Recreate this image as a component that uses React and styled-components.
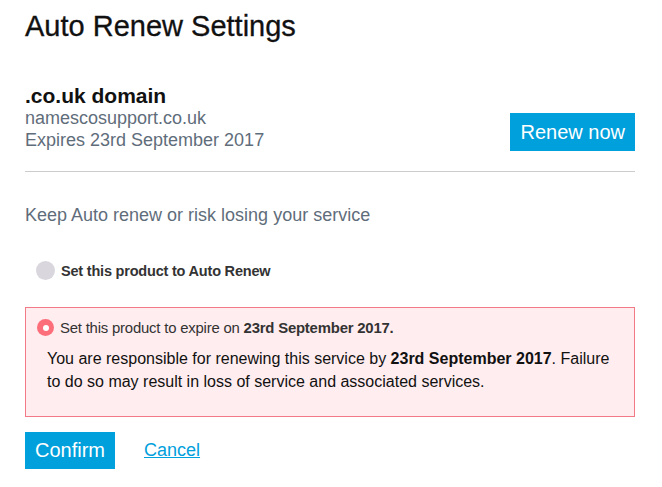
import React from "react";
import styled, { createGlobalStyle } from "styled-components";

const Global = createGlobalStyle`
  html, body { margin: 0; padding: 0; background: #fff; }
  body { font-family: "Liberation Sans", Arial, sans-serif; color: #111; }
`;

const Page = styled.div`
  width: 610px;
  padding: 9px 27px 0 25px;
`;

const Title = styled.h1`
  margin: 0;
  font-size: 29px;
  font-weight: 400;
  line-height: 34px;
  color: #111;
  -webkit-text-stroke: 0.3px #111;
`;

const ProductRow = styled.div`
  display: flex;
  justify-content: space-between;
  align-items: flex-end;
  margin-top: 42px;
  padding-bottom: 20px;
  border-bottom: 1px solid #cccccc;
`;

const ProductInfo = styled.div`
  display: flex;
  flex-direction: column;
`;

const ProductName = styled.div`
  font-size: 21px;
  font-weight: 700;
  line-height: 22px;
  color: #111;
`;

const Meta = styled.div`
  font-size: 18px;
  line-height: 22px;
  color: #5f6d7b;
`;

const PrimaryButton = styled.button`
  background: #00a0dc;
  color: #fff;
  border: none;
  font-family: inherit;
  font-size: 20px;
  height: ${(p) => p.$h || 38}px;
  padding: 0 ${(p) => p.$px || 10}px;
  cursor: pointer;
`;

const Lead = styled.p`
  margin: 32px 0 0;
  font-size: 18px;
  line-height: 22px;
  color: #5f6d7b;
`;

const OptionRow = styled.label`
  display: flex;
  align-items: center;
  gap: 6px;
  font-size: ${(p) => p.$size || 14.5}px;
  color: #333;
  letter-spacing: -0.2px;
`;

const PlainOption = styled(OptionRow)`
  margin: 35px 0 0 11px;
`;

const Radio = styled.span`
  width: ${(p) => (p.$checked ? 17 : 19)}px;
  height: ${(p) => (p.$checked ? 17 : 19)}px;
  border-radius: 50%;
  background: ${(p) => (p.$checked ? "#fd6e7b" : "#d9d6dd")};
  display: flex;
  align-items: center;
  justify-content: center;
  flex-shrink: 0;
  &::after {
    content: "";
    display: ${(p) => (p.$checked ? "block" : "none")};
    width: 6px;
    height: 6px;
    border-radius: 50%;
    background: #fff;
  }
`;

const Warning = styled.div`
  margin-top: 27px;
  background: #ffedef;
  border: 1px solid #f27a86;
  padding: 11px 10px 23px 11px;
`;

const WarningText = styled.p`
  margin: 11px 0 0 10px;
  font-size: 16px;
  line-height: 23px;
  color: #111;
`;

const Actions = styled.div`
  display: flex;
  align-items: center;
  gap: 29px;
  margin-top: 15px;
`;

const CancelLink = styled.a`
  color: #00a0dc;
  font-size: 18px;
  text-decoration: underline;
  cursor: pointer;
`;

export default function App() {
  return (
    <>
      <Global />
      <Page>
        <Title>Auto Renew Settings</Title>
        <ProductRow>
          <ProductInfo>
            <ProductName>.co.uk domain</ProductName>
            <Meta>namescosupport.co.uk</Meta>
            <Meta>Expires 23rd September 2017</Meta>
          </ProductInfo>
          <PrimaryButton>Renew now</PrimaryButton>
        </ProductRow>
        <Lead>Keep Auto renew or risk losing your service</Lead>
        <PlainOption>
          <Radio />
          <b>Set this product to Auto Renew</b>
        </PlainOption>
        <Warning>
          <OptionRow $size={14.9}>
            <Radio $checked />
            <span>
              Set this product to expire on <b>23rd September 2017.</b>
            </span>
          </OptionRow>
          <WarningText>
            You are responsible for renewing this service by <b>23rd September 2017</b>. Failure to do so may result in loss of service and associated services.
          </WarningText>
        </Warning>
        <Actions>
          <PrimaryButton $h={37}>Confirm</PrimaryButton>
          <CancelLink>Cancel</CancelLink>
        </Actions>
      </Page>
    </>
  );
}
